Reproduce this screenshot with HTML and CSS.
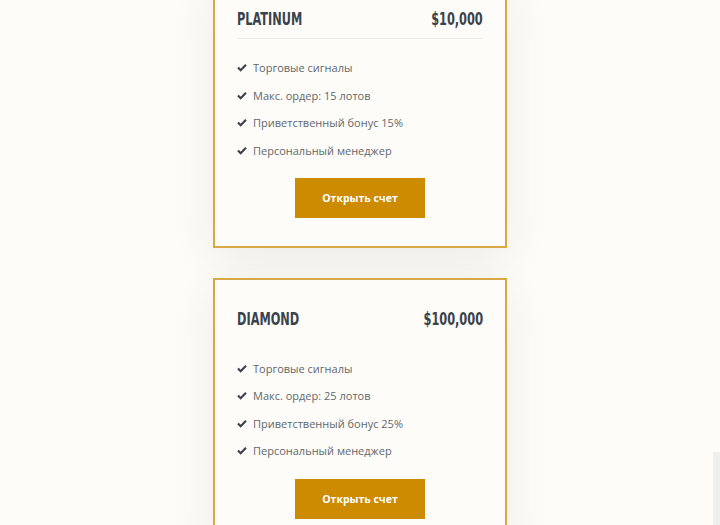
FILE: index.html
```html
<!DOCTYPE html>
<html lang="ru">
<head>
    <meta charset="UTF-8">
    <meta name="viewport" content="width=device-width, initial-scale=1.0">
    <title>Счета</title>
    <link rel="stylesheet" href="styles.css">
</head>
<body>

    <div class="plans">
        <div class="plan">
            <div class="plan-head">
                <span class="plan-name">PLATINUM</span>
                <span class="plan-price">$10,000</span>
            </div>
            <ul class="plan-list">
                <li><svg class="check" viewBox="0 0 12 10"><path d="M1.2 5 L4.4 8.2 L10.8 1.8" /></svg>Торговые сигналы</li>
                <li><svg class="check" viewBox="0 0 12 10"><path d="M1.2 5 L4.4 8.2 L10.8 1.8" /></svg>Макс. ордер: 15 лотов</li>
                <li><svg class="check" viewBox="0 0 12 10"><path d="M1.2 5 L4.4 8.2 L10.8 1.8" /></svg>Приветственный бонус 15%</li>
                <li><svg class="check" viewBox="0 0 12 10"><path d="M1.2 5 L4.4 8.2 L10.8 1.8" /></svg>Персональный менеджер</li>
            </ul>
            <button class="open-btn">Открыть счет</button>
        </div>

        <div class="plan">
            <div class="plan-head no-line">
                <span class="plan-name">DIAMOND</span>
                <span class="plan-price">$100,000</span>
            </div>
            <ul class="plan-list">
                <li><svg class="check" viewBox="0 0 12 10"><path d="M1.2 5 L4.4 8.2 L10.8 1.8" /></svg>Торговые сигналы</li>
                <li><svg class="check" viewBox="0 0 12 10"><path d="M1.2 5 L4.4 8.2 L10.8 1.8" /></svg>Макс. ордер: 25 лотов</li>
                <li><svg class="check" viewBox="0 0 12 10"><path d="M1.2 5 L4.4 8.2 L10.8 1.8" /></svg>Приветственный бонус 25%</li>
                <li><svg class="check" viewBox="0 0 12 10"><path d="M1.2 5 L4.4 8.2 L10.8 1.8" /></svg>Персональный менеджер</li>
            </ul>
            <button class="open-btn">Открыть счет</button>
        </div>
    </div>

    <div class="side-tab"></div>

</body>
</html>
```

FILE: styles.css
```css
body {
    font-family: "Open Sans", Lato, sans-serif;
    background-color: #fdfcf7;
    margin: 0;
    padding: 0;
    overflow: hidden;
}

.plans {
    display: flex;
    flex-direction: column;
    align-items: center;
    gap: 30px;
    margin-top: -22px;
}

.plan {
    box-sizing: content-box;
    width: 246px;
    border: 2px solid #d8a846;
    background-color: #fdfcf8;
    padding: 26px 22px 28px 22px;
    box-shadow: 0 12px 45px rgba(0, 0, 0, 0.07);
    display: flex;
    flex-direction: column;
}

.plan-head {
    display: flex;
    justify-content: space-between;
    align-items: center;
    height: 24px;
    padding-bottom: 8px;
    border-bottom: 1px solid #efede7;
}

.plan-head.no-line {
    border-bottom-color: transparent;
}

/* narrow headline look: squeeze a condensed bold face */
.plan-name,
.plan-price {
    display: inline-block;
    font-family: "DejaVu Sans Condensed", "Liberation Sans Narrow", sans-serif;
    font-weight: bold;
    font-size: 18px;
    color: #3a434b;
    transform: scaleX(0.7);
}

.plan-name {
    transform-origin: left center;
}

.plan-price {
    transform-origin: right center;
}

.plan-list {
    list-style-type: none;
    margin: 15px 0 0;
    padding: 0;
}

.plan-list li {
    display: flex;
    align-items: center;
    height: 27.6px;
    font-size: 11px;
    color: #63676b;
}

.check {
    width: 10px;
    height: 9px;
    margin-right: 6px;
    fill: none;
    stroke: #3a434b;
    stroke-width: 2.6;
}

.open-btn {
    align-self: center;
    margin-top: 14px;
    width: 130px;
    height: 40px;
    border: none;
    background-color: #cc8b00;
    color: #fff;
    font-family: "Open Sans", sans-serif;
    font-weight: bold;
    font-size: 10.5px;
    cursor: pointer;
}

.side-tab {
    position: fixed;
    right: 0;
    top: 452px;
    width: 7px;
    height: 80px;
    background-color: #efefeb;
}
```
